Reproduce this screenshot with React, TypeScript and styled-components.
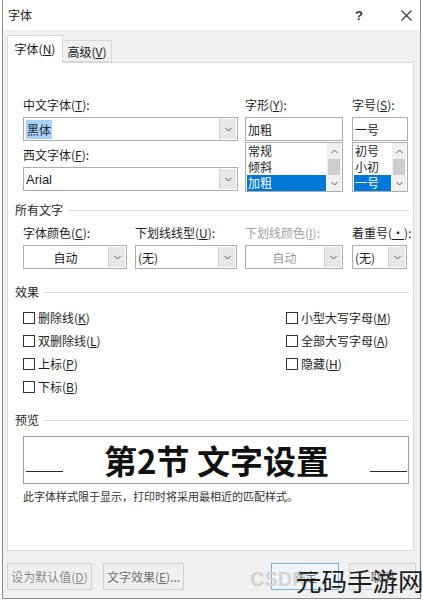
import React from "react";
import styled, { createGlobalStyle } from "styled-components";

const GlobalStyle = createGlobalStyle`
  html, body { margin: 0; padding: 0; background: #ffffff; }
  body {
    font-family: "Noto Sans CJK SC", "Noto Sans", sans-serif;
    font-size: 12px;
    color: #1e1e1e;
  }
  * { box-sizing: border-box; }
  u { text-underline-offset: 1px; }
`;

const Root = styled.div`
  position: relative;
  width: 423px;
  height: 600px;
  overflow: hidden;
`;

const Window = styled.div`
  margin-left: 2px;
  width: 419px;
  height: 599px;
  border: 1px solid #8d8d8d;
  border-top: none;
  background: #f0f0f0;
  display: flex;
  flex-direction: column;
`;

const TitleBar = styled.div`
  height: 30px;
  background: #ffffff;
  display: flex;
  align-items: center;
  padding-left: 5px;
  flex-shrink: 0;
`;

const Title = styled.div`
  flex: 1;
  font-size: 12px;
  line-height: 16px;
  color: #1a1a1a;
`;

const HelpButton = styled.div`
  width: 20px;
  text-align: center;
  font-family: "Liberation Sans", sans-serif;
  font-size: 13px;
  font-weight: bold;
  color: #333;
  margin-right: 23px;
`;

const CloseButton = styled.div`
  width: 28px;
  display: flex;
  justify-content: center;
  align-items: center;
`;

const TabBar = styled.div`
  height: 32px;
  display: flex;
  align-items: flex-end;
  padding-left: 4px;
  flex-shrink: 0;
`;

const Tab = styled.div<{ $active?: boolean }>`
  position: relative;
  z-index: ${(p) => (p.$active ? 2 : 1)};
  height: ${(p) => (p.$active ? "28px" : "22px")};
  width: ${(p) => (p.$active ? "56px" : "49px")};
  margin-bottom: ${(p) => (p.$active ? "-1px" : "0")};
  background: ${(p) => (p.$active ? "#ffffff" : "#f0f0f0")};
  border: 1px solid #d9d9d9;
  border-bottom: ${(p) => (p.$active ? "none" : "1px solid #d9d9d9")};
  border-left: ${(p) => (p.$active ? "1px solid #d9d9d9" : "none")};
  display: flex;
  align-items: center;
  justify-content: center;
  font-size: 12px;
  color: #1a1a1a;
  padding-bottom: ${(p) => (p.$active ? "2px" : "0")};
`;

const Panel = styled.div`
  position: relative;
  z-index: 1;
  margin: 0 6px 0 4px;
  height: 489px;
  flex-shrink: 0;
  background: #ffffff;
  border: 1px solid #d9d9d9;
  padding: 0 4px 0 7px;
  display: flex;
  flex-direction: column;
`;

const Content = styled.div<{ $top: number }>`
  margin-left: 8px;
  margin-top: ${(p) => p.$top}px;
`;

const TopGrid = styled.div`
  display: grid;
  grid-template-columns: 215px 98px 56px;
  column-gap: 0;
  gap: 0;
  & > :nth-child(1) { margin-right: 7px; }
  & > :nth-child(2) { margin-right: 9px; }
  grid-template-columns: 222px 107px 56px;
`;

const Column = styled.div`
  display: flex;
  flex-direction: column;
`;

const Label = styled.div<{ $disabled?: boolean; $gapTop?: number }>`
  font-size: 12px;
  line-height: 16px;
  height: 16px;
  white-space: nowrap;
  color: ${(p) => (p.$disabled ? "#a3a3a3" : "#1e1e1e")};
  margin-top: ${(p) => p.$gapTop ?? 0}px;
  margin-bottom: 4px;
`;

const SelectBox = styled.div<{ $disabled?: boolean; $center?: boolean }>`
  height: 24px;
  border: 1px solid #adadad;
  background: #ffffff;
  display: flex;
  align-items: stretch;
  color: ${(p) => (p.$disabled ? "#9a9a9a" : "#1e1e1e")};
`;

const SelectValue = styled.div<{ $center?: boolean; $latin?: boolean }>`
  flex: 1;
  display: flex;
  align-items: center;
  justify-content: ${(p) => (p.$center ? "center" : "flex-start")};
  padding-left: ${(p) => (p.$center ? "0" : "2px")};
  font-family: ${(p) =>
    p.$latin ? `"Liberation Sans", sans-serif` : `"Noto Sans CJK SC", sans-serif`};
  font-size: ${(p) => (p.$latin ? "13px" : "12px")};
  white-space: nowrap;
  overflow: hidden;
`;

const Highlight = styled.span`
  background: #a9d1f5;
  color: #1a2a3a;
  padding: 1px 1px;
`;

const DropButton = styled.div`
  width: 17px;
  margin: 1px;
  background: #e7e7e7;
  border-left: 1px solid #cfcfcf;
  display: flex;
  align-items: center;
  justify-content: center;
`;

const TextInput = styled.div`
  height: 24px;
  border: 1px solid #adadad;
  background: #ffffff;
  display: flex;
  align-items: center;
  padding-left: 2px;
  font-size: 12px;
`;

const ListBox = styled.div`
  margin-top: 1px;
  height: 50px;
  border: 1px solid #adadad;
  background: #ffffff;
  display: flex;
  padding: 0 1px 0 1px;
`;

const ListItems = styled.div`
  flex: 1;
  display: flex;
  flex-direction: column;
`;

const ListItem = styled.div<{ $selected?: boolean }>`
  height: 16px;
  line-height: 16px;
  padding-left: 1px;
  font-size: 12px;
  background: ${(p) => (p.$selected ? "#0078d7" : "transparent")};
  color: ${(p) => (p.$selected ? "#ffffff" : "#1e1e1e")};
  margin-right: 1px;
`;

const ScrollBar = styled.div`
  width: 14px;
  display: flex;
  flex-direction: column;
  background: #f0f0f0;
`;

const ScrollArrow = styled.div`
  height: 16px;
  display: flex;
  align-items: center;
  justify-content: center;
`;

const ScrollThumb = styled.div`
  flex: 1;
  margin: 0 1px;
  background: #cdcdcd;
`;

const SectionHeading = styled.div<{ $top: number }>`
  display: flex;
  align-items: center;
  margin-top: ${(p) => p.$top}px;
  height: 16px;
  font-size: 12px;
  line-height: 16px;
  color: #1e1e1e;
`;

const HeadingLine = styled.div`
  flex: 1;
  height: 1px;
  background: #dcdcdc;
  margin-left: 5px;
`;

const OptionsGrid = styled.div`
  display: grid;
  grid-template-columns: 104px 102px 98px 56px;
  column-gap: 8px;
  & > :nth-child(4) { margin-left: 1px; }
`;

const EffectsGrid = styled.div`
  display: grid;
  grid-template-columns: 263px 1fr;
`;

const CheckRow = styled.div`
  height: 23px;
  display: flex;
  align-items: center;
  font-size: 12px;
  white-space: nowrap;
`;

const CheckBox = styled.div`
  width: 12px;
  height: 12px;
  border: 1px solid #333333;
  background: #ffffff;
  margin-right: 3px;
  flex-shrink: 0;
`;

const PreviewBox = styled.div`
  height: 48px;
  border: 1px solid #a0a0a0;
  display: flex;
  align-items: stretch;
  padding: 0 1px 0 2px;
`;

const BaseLine = styled.div`
  width: 37px;
  align-self: flex-end;
  height: 1px;
  background: #2a2a2a;
  margin-bottom: 11px;
`;

const PreviewText = styled.div`
  flex: 1;
  display: flex;
  align-items: center;
  justify-content: center;
  font-family: "Noto Sans CJK SC", sans-serif;
  font-weight: 700;
  font-size: 33px;
  line-height: 46px;
  color: #111111;
  white-space: pre;
`;

const Caption = styled.div`
  margin-top: 4px;
  font-size: 11px;
  line-height: 16px;
  color: #333333;
  white-space: nowrap;
`;

const Footer = styled.div`
  display: flex;
  align-items: flex-start;
  padding: 12px 4px 0 4px;
`;

const Button = styled.div<{ $width: number; $gap?: number; $primary?: boolean; $dim?: boolean }>`
  width: ${(p) => p.$width}px;
  height: 27px;
  margin-left: ${(p) => p.$gap ?? 0}px;
  border: 1px solid ${(p) => (p.$primary ? "#7eb0e2" : "#d2d2d2")};
  background: ${(p) => (p.$primary ? "#eef5fc" : "#efefef")};
  display: flex;
  align-items: center;
  justify-content: center;
  font-size: 12px;
  color: ${(p) => (p.$dim ? "#8c8c8c" : "#6e6e6e")};
  white-space: nowrap;
`;

const Spacer = styled.div`
  flex: 1;
`;

const WatermarkCSDN = styled.div`
  position: absolute;
  left: 250px;
  top: 568px;
  font-family: "Liberation Sans", sans-serif;
  font-size: 20px;
  font-weight: bold;
  color: #d4d4d4;
  letter-spacing: 0px;
  z-index: 5;
`;

const WatermarkMain = styled.div`
  position: absolute;
  left: 296px;
  top: 562px;
  font-family: "Noto Sans CJK SC", sans-serif;
  font-size: 25.5px;
  line-height: 36px;
  color: #1c1c1c;
  white-space: nowrap;
  z-index: 6;
`;

const Chevron = ({ up }: { up?: boolean }) => (
  <svg width="7" height="5" viewBox="0 0 7 5">
    <polyline
      points={up ? "0.5,4 3.5,1 6.5,4" : "0.5,1 3.5,4 6.5,1"}
      fill="none"
      stroke="#5a5a5a"
      strokeWidth="1"
    />
  </svg>
);

const Select = ({
  children,
  disabled,
  center,
  latin,
}: {
  children: React.ReactNode;
  disabled?: boolean;
  center?: boolean;
  latin?: boolean;
}) => (
  <SelectBox $disabled={disabled}>
    <SelectValue $center={center} $latin={latin}>
      {children}
    </SelectValue>
    <DropButton>
      <Chevron />
    </DropButton>
  </SelectBox>
);

const List = ({ items, selected }: { items: string[]; selected: number }) => (
  <ListBox>
    <ListItems>
      {items.map((it, i) => (
        <ListItem key={it} $selected={i === selected}>
          {it}
        </ListItem>
      ))}
    </ListItems>
    <ScrollBar>
      <ScrollArrow>
        <Chevron up />
      </ScrollArrow>
      <ScrollThumb />
      <ScrollArrow>
        <Chevron />
      </ScrollArrow>
    </ScrollBar>
  </ListBox>
);

const Check = ({ children }: { children: React.ReactNode }) => (
  <CheckRow>
    <CheckBox />
    <span>{children}</span>
  </CheckRow>
);

export default function App() {
  return (
    <Root>
      <GlobalStyle />
      <Window>
        <TitleBar>
          <Title>字体</Title>
          <HelpButton>?</HelpButton>
          <CloseButton>
            <svg width="11" height="11" viewBox="0 0 11 11">
              <path d="M0.5 0.5 L10.5 10.5 M10.5 0.5 L0.5 10.5" stroke="#333" strokeWidth="1.1" />
            </svg>
          </CloseButton>
        </TitleBar>
        <TabBar>
          <Tab $active>
            字体(<u>N</u>)
          </Tab>
          <Tab>
            高级(<u>V</u>)
          </Tab>
        </TabBar>
        <Panel>
          <Content $top={34}>
            <TopGrid>
              <Column>
                <Label>
                  中文字体(<u>T</u>):
                </Label>
                <Select>
                  <Highlight>黑体</Highlight>
                </Select>
                <Label $gapTop={6}>
                  西文字体(<u>F</u>):
                </Label>
                <Select latin>Arial</Select>
              </Column>
              <Column>
                <Label>
                  字形(<u>Y</u>):
                </Label>
                <TextInput>加粗</TextInput>
                <List items={["常规", "倾斜", "加粗"]} selected={2} />
              </Column>
              <Column>
                <Label>
                  字号(<u>S</u>):
                </Label>
                <TextInput>一号</TextInput>
                <List items={["初号", "小初", "一号"]} selected={2} />
              </Column>
            </TopGrid>
          </Content>

          <SectionHeading $top={10}>
            所有文字
            <HeadingLine />
          </SectionHeading>
          <Content $top={7}>
            <OptionsGrid>
              <Column>
                <Label>
                  字体颜色(<u>C</u>):
                </Label>
                <Select center>自动</Select>
              </Column>
              <Column>
                <Label>
                  下划线线型(<u>U</u>):
                </Label>
                <Select>(无)</Select>
              </Column>
              <Column>
                <Label $disabled>
                  下划线颜色(<u>I</u>):
                </Label>
                <Select center disabled>
                  自动
                </Select>
              </Column>
              <Column>
                <Label>
                  着重号(<u>·</u>):
                </Label>
                <Select>(无)</Select>
              </Column>
            </OptionsGrid>
          </Content>

          <SectionHeading $top={15}>
            效果
            <HeadingLine />
          </SectionHeading>
          <Content $top={6}>
            <EffectsGrid>
              <Column>
                <Check>
                  删除线(<u>K</u>)
                </Check>
                <Check>
                  双删除线(<u>L</u>)
                </Check>
                <Check>
                  上标(<u>P</u>)
                </Check>
                <Check>
                  下标(<u>B</u>)
                </Check>
              </Column>
              <Column>
                <Check>
                  小型大写字母(<u>M</u>)
                </Check>
                <Check>
                  全部大写字母(<u>A</u>)
                </Check>
                <Check>
                  隐藏(<u>H</u>)
                </Check>
              </Column>
            </EffectsGrid>
          </Content>

          <SectionHeading $top={14}>
            预览
            <HeadingLine />
          </SectionHeading>
          <Content $top={8}>
            <PreviewBox>
              <BaseLine />
              <PreviewText>第2节 文字设置</PreviewText>
              <BaseLine />
            </PreviewBox>
            <Caption>此字体样式限于显示，打印时将采用最相近的匹配样式。</Caption>
          </Content>
        </Panel>
        <Footer>
          <Button $width={85} $dim>
            设为默认值(<u>D</u>)
          </Button>
          <Button $width={81} $gap={11}>
            文字效果(<u>E</u>)...
          </Button>
          <Spacer />
          <Button $width={68} $primary>
            确定
          </Button>
          <Button $width={67} $gap={10}>
            取消
          </Button>
        </Footer>
      </Window>
      <WatermarkCSDN>CSDN</WatermarkCSDN>
      <WatermarkMain>元码手游网</WatermarkMain>
    </Root>
  );
}
